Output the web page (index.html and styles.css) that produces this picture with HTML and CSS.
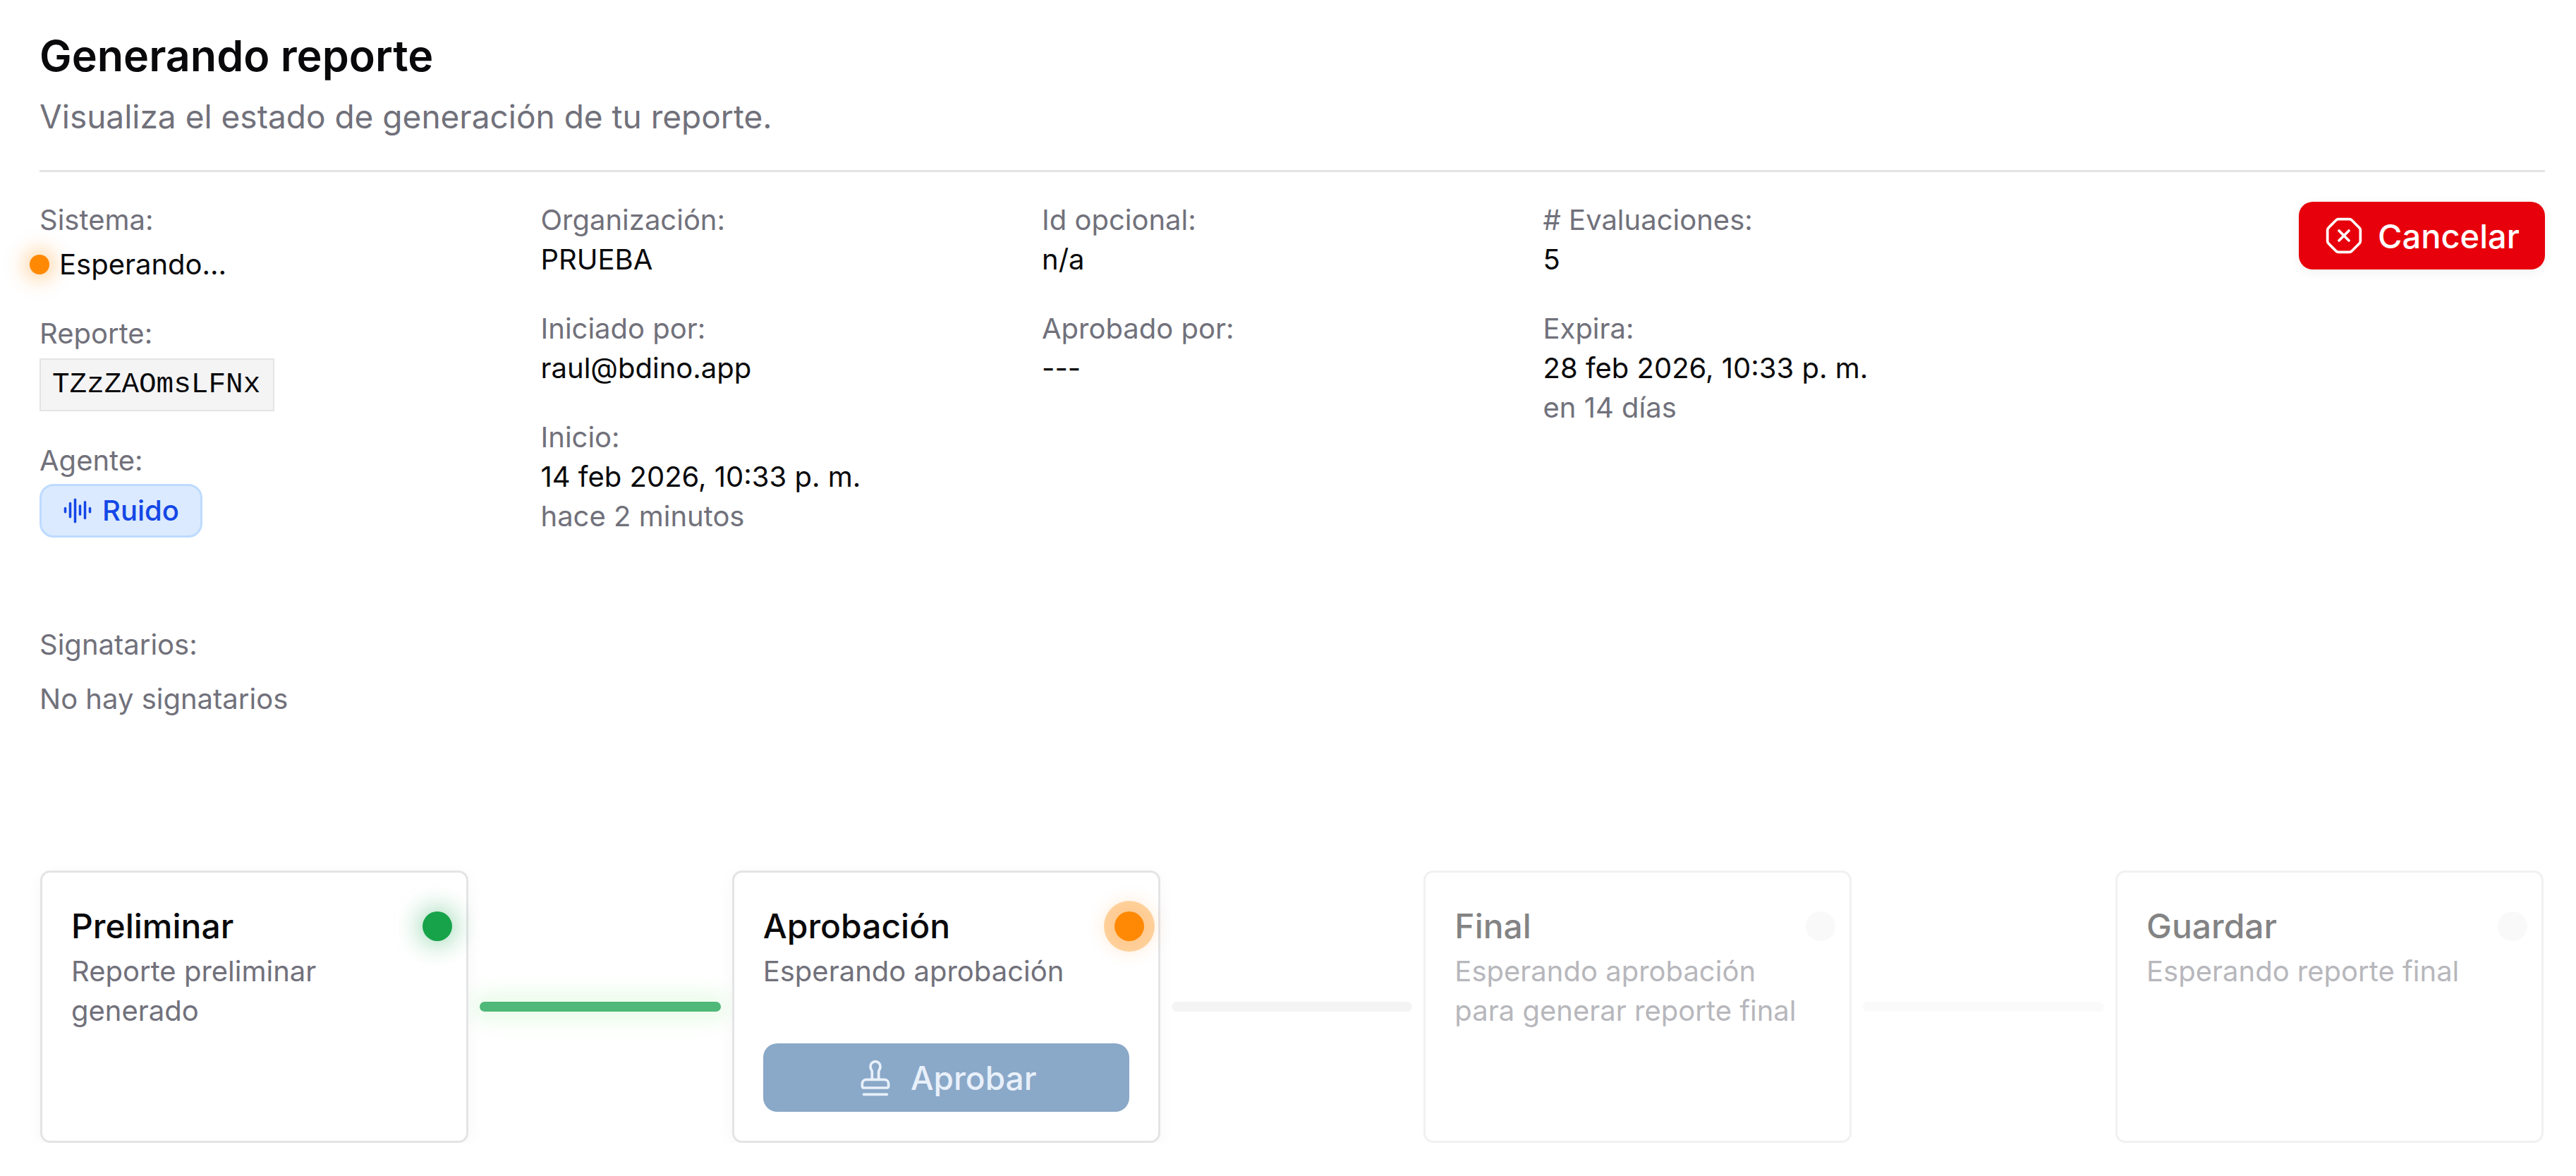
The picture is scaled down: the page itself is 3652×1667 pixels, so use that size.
FILE: index.html
```html
<!DOCTYPE html>
<html lang="es">
<head>
    <meta charset="UTF-8">
    <title>Generando reporte</title>
    <link rel="stylesheet" href="styles.css">
</head>
<body>
    <div class="page">
        <header class="page-head">
            <h1>Generando reporte</h1>
            <p>Visualiza el estado de generación de tu reporte.</p>
        </header>

        <section class="info">
            <div class="info-col">
                <div class="label">Sistema:</div>
                <div class="status"><span class="status-dot"></span>Esperando…</div>
                <div class="label group">Reporte:</div>
                <code class="report-id">TZzZAOmsLFNx</code>
                <div class="label group">Agente:</div>
                <span class="badge">
                    <svg class="icon-badge" viewBox="0 0 24 24"><path d="M2 10v3"/><path d="M6 6v11"/><path d="M10 3v18"/><path d="M14 8v7"/><path d="M18 5v13"/><path d="M22 10v3"/></svg>
                    Ruido
                </span>
            </div>
            <div class="info-col">
                <div class="label">Organización:</div>
                <div class="value">PRUEBA</div>
                <div class="label group">Iniciado por:</div>
                <div class="value">raul@bdino.app</div>
                <div class="label group">Inicio:</div>
                <div class="value">14 feb 2026, 10:33 p. m.</div>
                <div class="label">hace 2 minutos</div>
            </div>
            <div class="info-col">
                <div class="label">Id opcional:</div>
                <div class="value">n/a</div>
                <div class="label group">Aprobado por:</div>
                <div class="value">---</div>
            </div>
            <div class="info-col">
                <div class="label"># Evaluaciones:</div>
                <div class="value">5</div>
                <div class="label group">Expira:</div>
                <div class="value">28 feb 2026, 10:33 p. m.</div>
                <div class="label">en 14 días</div>
            </div>
            <div class="info-col info-actions">
                <button class="btn-cancel">
                    <svg class="icon-btn" viewBox="0 0 24 24"><path d="m15 9-6 6"/><path d="M2.586 16.726A2 2 0 0 1 2 15.312V8.688a2 2 0 0 1 .586-1.414l4.688-4.688A2 2 0 0 1 8.688 2h6.624a2 2 0 0 1 1.414.586l4.688 4.688A2 2 0 0 1 22 8.688v6.624a2 2 0 0 1-.586 1.414l-4.688 4.688a2 2 0 0 1-1.414.586H8.688a2 2 0 0 1-1.414-.586z"/><path d="m9 9 6 6"/></svg>
                    Cancelar
                </button>
            </div>
        </section>

        <section class="signers">
            <div class="label">Signatarios:</div>
            <div class="label signers-empty">No hay signatarios</div>
        </section>

        <section class="stepper">
            <div class="step">
                <span class="step-dot dot-done"></span>
                <h3>Preliminar</h3>
                <p>Reporte preliminar generado</p>
            </div>
            <div class="connector connector-done"></div>
            <div class="step">
                <span class="step-dot dot-waiting"></span>
                <h3>Aprobación</h3>
                <p>Esperando aprobación</p>
                <button class="btn-approve">
                    <svg class="icon-btn" viewBox="0 0 24 24"><path d="M14 13V8.5C14 7 15 7 15 5a3 3 0 0 0-6 0c0 2 1 2 1 3.5V13"/><path d="M20 15.5a2.5 2.5 0 0 0-2.5-2.5h-11A2.5 2.5 0 0 0 4 15.5V17a1 1 0 0 0 1 1h14a1 1 0 0 0 1-1z"/><path d="M5 22h14"/></svg>
                    Aprobar
                </button>
            </div>
            <div class="connector"></div>
            <div class="step step-off">
                <span class="step-dot"></span>
                <h3>Final</h3>
                <p>Esperando aprobación para generar reporte final</p>
            </div>
            <div class="connector connector-off"></div>
            <div class="step step-off">
                <span class="step-dot"></span>
                <h3>Guardar</h3>
                <p>Esperando reporte final</p>
            </div>
        </section>
    </div>
</body>
</html>
```

FILE: styles.css
```css
body {
    margin: 0;
    background-color: #ffffff;
    color: #09090b;
    font-family: 'Inter', sans-serif;
    font-size: 40px;
    line-height: 56px;
}
.page {
    padding: 43px 44px 0 56px;
}
.page-head {
    padding-bottom: 48px;
    border-bottom: 3px solid #e4e4e7;
}
.page-head h1 {
    margin: 0;
    font-size: 61px;
    line-height: 72px;
    font-weight: 600;
}
.page-head p {
    margin: 22px 0 0;
    font-size: 46px;
    color: #71717b;
}
.info {
    display: grid;
    grid-template-columns: repeat(4, 710.5px) 1fr;
    margin-top: 40px;
}
.label {
    color: #71717b;
}
.group {
    margin-top: 42px;
}
.status {
    display: flex;
    align-items: center;
    gap: 14px;
    margin-top: 7px;
    margin-left: -14px;
}
.status-dot {
    width: 28px;
    height: 28px;
    border-radius: 50%;
    background-color: #ff8904;
    box-shadow: 0 0 28px 8px rgba(255, 137, 4, 0.35);
}
.report-id {
    display: block;
    box-sizing: border-box;
    width: 333px;
    height: 75px;
    margin-top: 7px;
    padding: 0 16px;
    border: 2px solid #e4e4e7;
    background-color: #f4f4f5;
    font-family: 'Liberation Mono', monospace;
    font-size: 41px;
    line-height: 71px;
}
.badge {
    display: inline-flex;
    align-items: center;
    gap: 14px;
    box-sizing: border-box;
    height: 76px;
    margin-top: 5px;
    padding: 0 30px;
    border: 3px solid #bedbff;
    border-radius: 20px;
    background-color: #dbeafe;
    color: #1447e6;
    font-weight: 500;
}
.icon-badge {
    width: 42px;
    height: 42px;
    fill: none;
    stroke: currentColor;
    stroke-width: 2;
    stroke-linecap: round;
    stroke-linejoin: round;
}
.info-actions {
    display: flex;
    justify-content: flex-end;
    align-items: flex-start;
}
.icon-btn {
    width: 56px;
    height: 56px;
    fill: none;
    stroke: currentColor;
    stroke-width: 1.6;
    stroke-linecap: round;
    stroke-linejoin: round;
}
.btn-cancel {
    display: flex;
    align-items: center;
    justify-content: center;
    gap: 20px;
    width: 349px;
    height: 96px;
    margin-top: 2px;
    padding: 0;
    border: none;
    border-radius: 20px;
    background-color: #e7000b;
    color: #ffffff;
    font-family: inherit;
    font-size: 47px;
    font-weight: 500;
    box-shadow: 0 4px 16px rgba(0, 0, 0, 0.06);
}
.signers {
    margin-top: 124px;
}
.signers-empty {
    margin-top: 21px;
}
.stepper {
    display: flex;
    align-items: center;
    margin-top: 215px;
    padding-left: 1px;
    padding-right: 2px;
}
.step {
    position: relative;
    flex: none;
    box-sizing: border-box;
    width: 607px;
    height: 386px;
    padding: 44px 41px 0;
    border: 3px solid #e4e4e7;
    border-radius: 14px;
    background-color: #ffffff;
    box-shadow: 0 6px 24px rgba(0, 0, 0, 0.04);
    display: flex;
    flex-direction: column;
}
.step h3 {
    margin: 0;
    font-size: 48px;
    line-height: 64px;
    font-weight: 500;
}
.step p {
    margin: 4px 0 0;
    color: #71717b;
}
.step-dot {
    position: absolute;
    top: 55px;
    right: 20px;
    width: 42px;
    height: 42px;
    border-radius: 50%;
    background-color: #f4f4f5;
}
.dot-done {
    background-color: #16a34a;
    box-shadow: 0 0 34px 6px rgba(22, 163, 74, 0.4);
}
.dot-waiting {
    background-color: #ff8904;
    box-shadow: 0 0 0 15px rgba(255, 137, 4, 0.35), 0 0 24px 16px rgba(255, 137, 4, 0.15);
}
.step-off {
    opacity: 0.5;
    box-shadow: none;
}
.connector {
    flex: 1;
    height: 14px;
    margin: 0 16px;
    border-radius: 7px;
    background-color: #f4f4f5;
}
.connector-done {
    background-color: #50b878;
    box-shadow: 0 0 30px 12px rgba(90, 230, 90, 0.14);
}
.connector-off {
    background-color: #fafafa;
}
.btn-approve {
    display: flex;
    align-items: center;
    justify-content: center;
    gap: 22px;
    flex: none;
    height: 97px;
    margin-top: auto;
    margin-bottom: 41px;
    padding: 0;
    border: none;
    border-radius: 20px;
    background-color: #8aa8c8;
    color: #e8f0fa;
    font-family: inherit;
    font-size: 46px;
    font-weight: 500;
}
```
